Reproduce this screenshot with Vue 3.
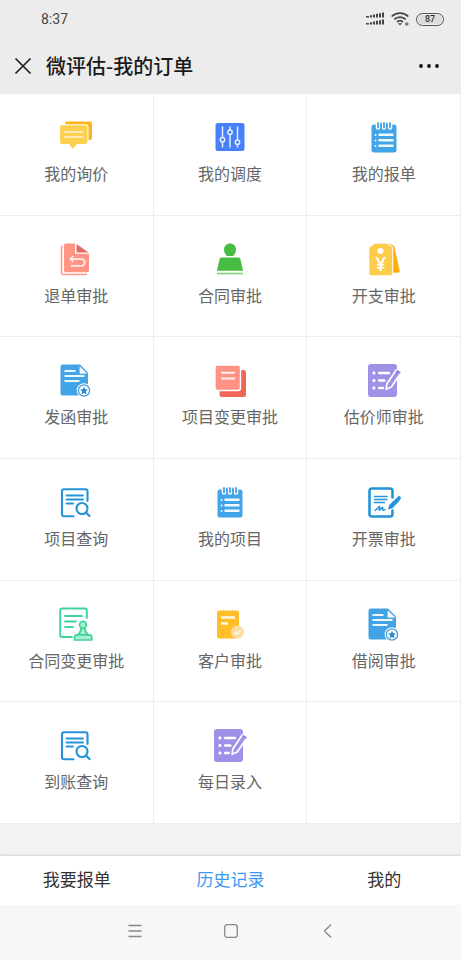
<script setup>
import { ref } from 'vue'

const items = [
  { label: '我的询价', icon: 'chat' },
  { label: '我的调度', icon: 'sliders' },
  { label: '我的报单', icon: 'notepad' },
  { label: '退单审批', icon: 'return' },
  { label: '合同审批', icon: 'stamp' },
  { label: '开支审批', icon: 'tag', mark: '¥' },
  { label: '发函审批', icon: 'letter' },
  { label: '项目变更审批', icon: 'pages' },
  { label: '估价师审批', icon: 'write' },
  { label: '项目查询', icon: 'search' },
  { label: '我的项目', icon: 'notepad' },
  { label: '开票审批', icon: 'sign' },
  { label: '合同变更审批', icon: 'contract' },
  { label: '客户审批', icon: 'client' },
  { label: '借阅审批', icon: 'letter' },
  { label: '到账查询', icon: 'search' },
  { label: '每日录入', icon: 'write' },
]

const tabs = ['我要报单', '历史记录', '我的']
const active = ref(1)
</script>

<template>
  <div class="page">
    <svg class="sprite" aria-hidden="true">
      <symbol id="i-chat" viewBox="0 0 36 36">
        <rect x="7" y="2.5" width="27" height="18.5" rx="2" fill="#fbb419" />
        <path d="M4 6.3h23.500a2 2 0 0 1 2 2V23a2 2 0 0 1-2 2h-8.700l-3.300 4.200q-.6.600-1.200 0L11 25H4a2 2 0 0 1-2-2V8.300a2 2 0 0 1 2-2z" fill="#fff" stroke="#fff" stroke-width="2" />
        <path d="M4 6.300h23.500a2 2 0 0 1 2 2V23a2 2 0 0 1-2 2h-8.700l-3.300 4.200q-.6.600-1.200 0L11 25H4a2 2 0 0 1-2-2V8.300a2 2 0 0 1 2-2z" fill="#ffcf52" />
        <path d="M7 13h17.500M7 18h17.500" stroke="#fff4d2" stroke-width="1.500" stroke-linecap="round" />
      </symbol>
      <symbol id="i-sliders" viewBox="0 0 36 36">
        <rect x="3.500" y="4" width="29" height="28" rx="2.500" fill="#4681fa" />
        <g fill="none" stroke="#e4edff" stroke-width="1.500" stroke-linecap="round">
          <path d="M10.500 8v6.500M10.500 19.500V28M10.500 8v10M18 8v3M18 15.500V28M25.500 8v13M25.500 25.500V28" />
          <circle cx="10.500" cy="20.700" r="2.200" fill="#4681fa" />
          <circle cx="18" cy="13.200" r="2.200" />
          <circle cx="25.500" cy="23.300" r="2.200" />
        </g>
      </symbol>
      <symbol id="i-notepad" viewBox="0 0 36 36">
        <rect x="5.500" y="5.500" width="25" height="28" rx="2.500" fill="#41a4e6" />
        <g fill="none" stroke-linecap="round">
          <path d="M12 2.500v6M18 2.500v6M24 2.500v6" stroke="#fff" stroke-width="4.600" />
          <path d="M12 4v4.500M18 4v4.500M24 4v4.500M15 4.500v3M21 4.500v3" stroke="#41a4e6" stroke-width="1.800" />
        </g>
        <g fill="#f1f9ff">
          <rect x="8.500" y="15" width="2" height="2" rx="1" /><rect x="12.500" y="14.500" width="15" height="2.600" rx=".6" />
          <rect x="8.500" y="20.500" width="2" height="2" rx="1" /><rect x="12.500" y="20" width="15" height="2.600" rx=".6" />
          <rect x="8.500" y="26" width="2" height="2" rx="1" /><rect x="12.500" y="25.500" width="15" height="2.600" rx=".6" />
        </g>
      </symbol>
      <symbol id="i-return" viewBox="0 0 36 36">
        <path d="M5 5q-1.500.300-1.500 2v24.500q0 2 2 2H27q1.300 0 1.500-1.200" fill="none" stroke="#ff9a8a" stroke-width="1.600" />
        <path d="M7.500 2.500H17v9.300q0 1 1 1h13V29.500q0 1.700-1.700 1.700H7.500Q6 31.200 6 29.500V4.200q0-1.700 1.500-1.700z" fill="#ff9585" />
        <path d="M18.500 3l12 8.500h-12z" fill="#e4696a" />
        <path d="M15.500 15L12.300 18.200l3.200 2.600M13 18.200h10.500a3.300 3.300 0 0 1 0 6.600H13" fill="none" stroke="#ffe9e5" stroke-width="1.700" stroke-linejoin="round" />
      </symbol>
      <symbol id="i-stamp" viewBox="0 0 36 36">
        <path d="M18 2.500c3.500 0 6 2.500 6 6 0 2.700-1.300 5.300-3 6.500h-6c-1.700-1.200-3-3.800-3-6.500 0-3.500 2.500-6 6-6z" fill="#48bd43" />
        <path d="M9.500 16.500h17q1.500 0 1.900 1.500l2.700 11.800H4.900L7.600 18q.4-1.500 1.900-1.500z" fill="#48bd43" />
        <path d="M4.900 32.500h26.200" stroke="#7fd27b" stroke-width="1.600" />
      </symbol>
      <symbol id="i-tag" viewBox="0 0 36 36">
        <path d="M22.500 2.200l5 2.600q.7.400.9 1.200l5.400 24.200q.2 1.300-1 1.400L24 32z" fill="#faae12" />
        <path d="M9 2.700h11.500l5 3.300q.7.500.7 1.300v25.200q0 1.700-1.700 1.700H5q-1.700 0-1.700-1.700V7.300q0-.8.700-1.300z" fill="#fff" stroke="#fff" stroke-width="2" />
        <path d="M9 2.700h11.500l5 3.300q.7.500.7 1.300v25.200q0 1.700-1.700 1.700H5q-1.700 0-1.700-1.700V7.300q0-.8.700-1.300z" fill="#ffcc48" />
        <circle cx="14.500" cy="10" r="3" fill="#fff" />
      </symbol>
      <symbol id="i-letter" viewBox="0 0 36 36">
        <path d="M5 2.500h17l8 8V31q0 2.500-2.500 2.500H5Q2.500 33.500 2.500 31V5Q2.500 2.500 5 2.500z" fill="#42a4e6" />
        <path d="M22 5v6.200h6.500z" fill="#f2faff" stroke="#f2faff" stroke-width=".8" stroke-linejoin="round" />
        <path d="M6.500 9h11M6.500 14h20M6.500 19h15" stroke="#eef8ff" stroke-width="1.900" />
        <circle cx="26" cy="28.500" r="7.300" fill="#fff" />
        <circle cx="26" cy="28.500" r="5.600" fill="#fff" stroke="#4899d6" stroke-width="1.300" />
        <path d="M26 24.800l1.200 2.400 2.600.4-1.900 1.900.5 2.700-2.400-1.300-2.400 1.300.5-2.700-1.900-1.900 2.600-.4z" fill="#268bd0" />
      </symbol>
      <symbol id="i-pages" viewBox="0 0 36 36">
        <rect x="7.500" y="8" width="26.500" height="27" rx="2.500" fill="#f26656" />
        <rect x="3" y="3" width="25.500" height="25.500" rx="2.500" fill="#ff9282" stroke="#fff" stroke-width="1.400" />
        <path d="M9 10.800h14M9 16.500h14" stroke="#fff0ed" stroke-width="1.900" />
      </symbol>
      <symbol id="i-write" viewBox="0 0 36 36">
        <rect x="2" y="2" width="29" height="33" rx="3" fill="#a091e8" />
        <g fill="#fff">
          <rect x="6.500" y="9.600" width="2.800" height="2.800" rx="1" /><rect x="12" y="9.700" width="12" height="2.600" rx="1" />
          <rect x="6.500" y="17.100" width="2.800" height="2.800" rx="1" /><rect x="12" y="17.200" width="7.500" height="2.600" rx="1" />
          <rect x="6.500" y="24.600" width="2.800" height="2.800" rx="1" /><rect x="12" y="24.700" width="6" height="2.600" rx="1" />
        </g>
        <path d="M20.200 27.300l.6-5.300L30.200 8l4.500 3L25.300 25z" fill="#a091e8" stroke="#fff" stroke-width="1.700" stroke-linejoin="round" />
        <path d="M30.500 8.500l3.800 2.500" stroke="#9282dc" stroke-width="2" />
      </symbol>
      <symbol id="i-search" viewBox="0 0 36 36">
        <g fill="none" stroke="#2493d8" stroke-linecap="round">
          <path d="M15.500 32.300H6q-2 0-2-2V7.200q0-2 2-2h21.500q2 0 2 2V17" stroke-width="2.100" />
          <path d="M8.500 11.500h16.500M8.500 15.500h16.500M8.500 19.500h6.500" stroke-width="1.800" />
          <circle cx="24" cy="24.500" r="5.500" stroke-width="2.100" />
          <path d="M28 28.500l3.500 3.500" stroke-width="2.200" />
        </g>
      </symbol>
      <symbol id="i-sign" viewBox="0 0 36 36">
        <g fill="none" stroke="#2493d8" stroke-linecap="round" stroke-linejoin="round">
          <path d="M26.500 13.500V7q0-2.500-2.500-2.500H6Q3.500 4.500 3.500 7v23q0 2.500 2.500 2.500h18q2.500 0 2.500-2.500v-3.500" stroke-width="2.600" />
          <path d="M8.500 12.500H21M8.500 15.500H21M8.500 18.500h10" stroke-width="1.400" />
          <path d="M9 26.500c2-1 3.500-4 4.500-4s-1.500 4 0 3.500 2-2.500 3-2.500-.5 2.500.5 2.700 1.500-.7 2-.7" stroke-width="1.400" />
        </g>
        <path d="M22 25.500l1.200-4.500L30.500 14l3 3-7.200 7.200z" fill="#2493d8" />
        <path d="M30.500 14l1.800-1.700q.8-.6 1.500 0l.9.900q.6.700 0 1.500L33 17z" fill="#2493d8" />
      </symbol>
      <symbol id="i-contract" viewBox="0 0 36 36">
        <g fill="none" stroke="#3fd49c" stroke-linecap="round" stroke-linejoin="round">
          <path d="M14 31H4q-1.800 0-1.800-1.800V4.300q0-1.800 1.800-1.800h23q1.800 0 1.800 1.800V12" stroke-width="1.900" />
          <path d="M7 10h17M7 15.500h11M7 21h8" stroke-width="1.800" />
          <path d="M23.200 21.800c0 3-1.200 5-3.200 7h10c-2-2-3.200-4-3.200-7z" fill="#a9efd0" stroke-width="1.700" />
          <circle cx="25" cy="18.800" r="3.400" fill="#a9efd0" stroke-width="1.700" />
          <path d="M19 28.800h12q2.800 0 2.800 2.500V34H16.500v-2.700q0-2.500 2.500-2.500z" fill="#a9efd0" stroke-width="1.700" />
        </g>
      </symbol>
      <symbol id="i-client" viewBox="0 0 36 36">
        <rect x="5" y="4.500" width="22" height="28" rx="2" fill="#ffbf29" />
        <path d="M9 11.500h14M9 17.500h7" stroke="#fff8e5" stroke-width="2.300" />
        <circle cx="25.500" cy="26" r="6.500" fill="#ffdda0" />
        <path d="M22.500 26l2.300 2.300 4-4.300" fill="none" stroke="#fff8e8" stroke-width="1.400" />
      </symbol>
    </svg>

    <header class="top">
      <div class="status">
        <span>8:37</span>
        <div class="signals">
          <svg width="18" height="14" viewBox="0 0 18 14" fill="#444" aria-hidden="true">
            <path d="M0 4h3v1.500H0zM4 3.300h2v2.200H4zM7 2.500h2v3H7zM10 1.700h2v3.800h-2zM13 1.200h2v4.300h-2zM16 .6h2v4.900h-2z" />
            <path d="M0 11h3v1.500H0zM4 10.300h2v2.200H4zM7 9.500h2v3H7zM10 8.700h2v3.800h-2zM13 8.200h2v4.300h-2zM16 7.600h2v4.900h-2z" />
          </svg>
          <svg width="18" height="14" viewBox="0 0 18 14" fill="none" stroke="#444" stroke-width="1.700" aria-hidden="true">
            <path d="M.7 4.500a12 12 0 0 1 16.600 0M3.300 7.300a8.300 8.300 0 0 1 11.400 0M6 10a4.500 4.500 0 0 1 6 0" />
            <path d="M7 11.200h4L9 13.500z" fill="#444" stroke="none" />
            <circle cx="15.800" cy="12" r="1.200" stroke-width="1" />
          </svg>
          <span class="battery">87</span>
        </div>
      </div>
      <div class="titlebar">
        <button class="plain" aria-label="关闭">
          <svg width="18" height="18" viewBox="0 0 18 18"><path d="M1.500 1.500l15 15M16.500 1.500l-15 15" stroke="#222" stroke-width="1.700" /></svg>
        </button>
        <h1>微评估-我的订单</h1>
        <button class="plain" aria-label="更多">
          <svg width="22" height="6" viewBox="0 0 22 6" fill="#111"><circle cx="3" cy="3" r="1.900" /><circle cx="11" cy="3" r="1.900" /><circle cx="19" cy="3" r="1.900" /></svg>
        </button>
      </div>
    </header>

    <main>
      <div class="grid">
        <a v-for="item in items" :key="item.label" class="cell" href="#">
          <svg class="icon" viewBox="0 0 36 36" aria-hidden="true">
            <use :href="'#i-' + item.icon" width="36" height="36" />
            <text v-if="item.mark" class="mark" x="14.700" y="30" text-anchor="middle">{{ item.mark }}</text>
          </svg>
          <span>{{ item.label }}</span>
        </a>
        <div class="cell"></div>
      </div>
    </main>

    <nav class="tabs">
      <a
        v-for="(tab, i) in tabs"
        :key="tab"
        href="#"
        :class="{ active: i === active }"
        @click.prevent="active = i"
      >{{ tab }}</a>
    </nav>

    <footer class="system">
      <button class="plain" aria-label="菜单">
        <svg width="16" height="16" viewBox="0 0 16 16" stroke="#888" stroke-width="1.300"><path d="M1.500 2.500h13M1.500 8h13M1.500 13.500h13" /></svg>
      </button>
      <button class="plain" aria-label="主页">
        <svg width="16" height="16" viewBox="0 0 16 16" fill="none" stroke="#888" stroke-width="1.300"><rect x="1.700" y="1.700" width="12.600" height="12.600" rx="2.500" /></svg>
      </button>
      <button class="plain" aria-label="返回">
        <svg width="16" height="16" viewBox="0 0 16 16" fill="none" stroke="#888" stroke-width="1.300"><path d="M12 1.500L5.500 8l6.500 6.500" /></svg>
      </button>
    </footer>
  </div>
</template>

<style>
body {
  margin: 0;
}
</style>

<style scoped>
.page {
  display: flex;
  flex-direction: column;
  min-height: 100vh;
  background: #f2f2f2;
  font-family: "Noto Sans CJK SC", sans-serif;
}
.sprite {
  position: absolute;
  width: 0;
  height: 0;
}
.top {
  background: #ececec;
}
.status {
  display: flex;
  align-items: center;
  justify-content: space-between;
  height: 38px;
  padding: 0 17px 0 41px;
  color: #444;
  font-family: Roboto, sans-serif;
  font-size: 14px;
}
.signals {
  display: flex;
  align-items: center;
  gap: 7px;
}
.battery {
  box-sizing: border-box;
  width: 28px;
  height: 13px;
  border: 1px solid #555;
  border-radius: 7px;
  background: #dcdcdc;
  box-shadow: inset 0 0 0 1px #ececec;
  color: #333;
  font-size: 9px;
  font-weight: 500;
  line-height: 11px;
  text-align: center;
}
.titlebar {
  display: flex;
  align-items: center;
  gap: 14px;
  height: 56px;
  padding: 0 21px 0 14px;
}
h1 {
  flex: 1;
  margin: 0;
  color: #1a1a1a;
  font-size: 20px;
  font-weight: 500;
  line-height: 28px;
}
.plain {
  display: flex;
  padding: 0;
  border: 0;
  background: none;
}
main {
  display: flex;
  flex: 1;
  flex-direction: column;
  padding-bottom: 32px;
}
.grid {
  display: grid;
  flex: 1;
  grid-template-columns: repeat(3, 1fr);
  grid-auto-rows: 1fr;
}
.cell {
  display: flex;
  flex-direction: column;
  align-items: center;
  gap: 6px;
  padding: 25px 0 29px;
  border-right: 1px solid #ededed;
  border-bottom: 1px solid #ededed;
  background: #fff;
  color: #666;
  font-size: 16px;
  line-height: 24px;
  text-decoration: none;
}
.icon {
  width: 36px;
  height: 36px;
}
.mark {
  fill: #fff;
  font-family: "Noto Sans", sans-serif;
  font-size: 19px;
  font-weight: 600;
}
.tabs {
  display: grid;
  grid-template-columns: repeat(3, 1fr);
  background: #fff;
  box-shadow: 0 -1px 2px rgba(0, 0, 0, 0.14);
}
.tabs a {
  padding-bottom: 4px;
  color: #333;
  font-size: 17px;
  line-height: 45px;
  text-align: center;
  text-decoration: none;
}
.tabs .active {
  color: #3d98f5;
}
.system {
  display: flex;
  align-items: center;
  justify-content: center;
  gap: 80px;
  padding: 18px 0 21px;
  background: #f7f7f7;
}
</style>
